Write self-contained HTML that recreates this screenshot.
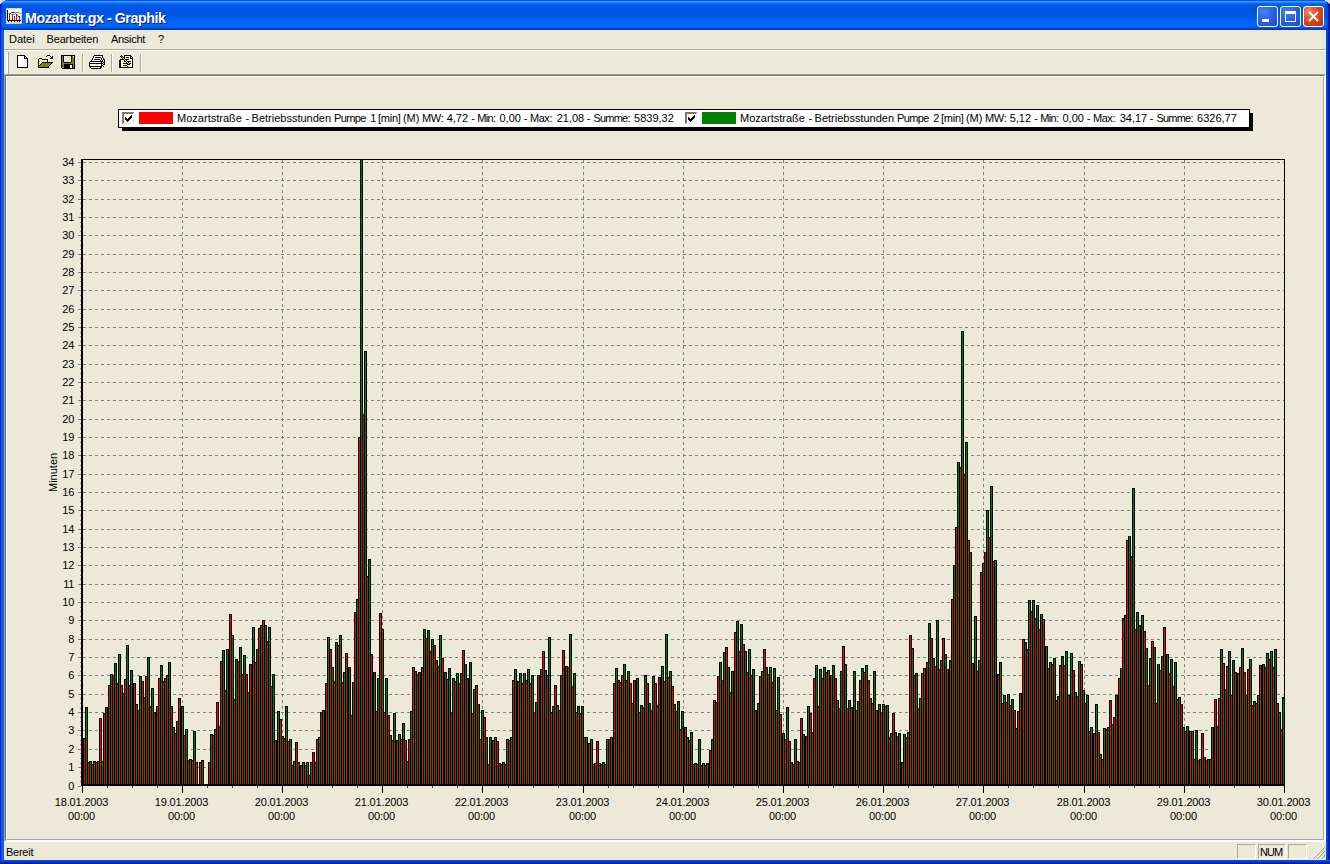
<!DOCTYPE html>
<html lang="de">
<head>
<meta charset="utf-8">
<title>Mozartstr.gx - Graphik</title>
<style>
html,body{margin:0;padding:0;}
body{width:1330px;height:864px;overflow:hidden;position:relative;background:#0831d9;font-family:"Liberation Sans",sans-serif;font-size:11px;color:#000;}
.abs{position:absolute;}
#win{position:absolute;left:0;top:0;width:1330px;height:864px;background:#ece9d8;overflow:hidden;}
#title{position:absolute;left:0;top:0;width:1330px;height:30px;
 background:linear-gradient(to bottom,#0a50dc 0px,#0a52e0 0.6px,#3d95ff 1.5px,#2084fc 2.5px,#0468f8 3.5px,#0260ee 4.5px,#005ae6 5.5px,#0057e3 6.5px,#0055e2 8px,#0056e4 13px,#0058e8 15px,#005bef 17.5px,#005ff6 19.5px,#0066ff 22px,#0066ff 25.5px,#0064fc 26.5px,#005af0 27.5px,#0046d8 28.5px,#0034c4 29.5px);}
#ttext{position:absolute;left:25px;top:9.5px;font-weight:bold;font-size:14.3px;line-height:16px;color:#fff;text-shadow:1px 1px 0 #0a1883;white-space:nowrap;letter-spacing:-0.48px;}
#bl{position:absolute;left:0;top:30px;width:4px;height:834px;background:linear-gradient(to right,#0019cf 0,#0831d9 25%,#166aee 50%,#0855dd 100%);}
#br{position:absolute;right:0;top:30px;width:4px;height:834px;background:linear-gradient(to right,#0855dd 0,#0041d6 40%,#001ea0 75%,#00138c 100%);}
#bb{position:absolute;left:0;bottom:0;width:1330px;height:4px;background:linear-gradient(to bottom,#0855dd 0,#0041d6 40%,#001ea0 75%,#00138c 100%);}
.tbtn{position:absolute;top:6px;width:21px;height:21px;box-sizing:border-box;border:1px solid #fff;border-radius:3px;
 background:radial-gradient(circle at 30% 25%,#4a80fa 0%,#2c62ec 45%,#1c47cc 100%);}
#bclose{background:radial-gradient(circle at 25% 25%,#ec8462 0%,#e0481c 45%,#bc300a 100%);}
#menu{position:absolute;left:4px;top:30px;width:1322px;height:19px;}
.mi{position:absolute;top:2px;line-height:14px;font-size:11px;white-space:nowrap;}
#msep1{position:absolute;left:4px;top:49px;width:1322px;height:1px;background:#aca899;}
#msep2{position:absolute;left:4px;top:50px;width:1322px;height:1px;background:#fff;}
.tsep{position:absolute;top:54px;width:1px;height:18px;background:#aca899;}
.tsep2{position:absolute;top:54px;width:1px;height:18px;background:#fff;}
#client{position:absolute;left:4px;top:74px;width:1322px;height:768px;box-sizing:border-box;border-top:1px solid #aca899;border-left:1px solid #aca899;border-right:1px solid #fff;border-bottom:1px solid #fff;background:#ece9d8;}
#client2{position:absolute;left:5px;top:75px;width:1320px;height:766px;box-sizing:border-box;border-top:1px solid #716f64;border-left:1px solid #716f64;border-right:1px solid #fff;border-bottom:1px solid #fff;}
#client3{position:absolute;left:6px;top:76px;width:1318px;height:764px;box-sizing:border-box;border-top:1px solid #fff;border-left:1px solid #fff;border-right:1px solid #aca899;border-bottom:1px solid #aca899;}
#legsh{position:absolute;left:122px;top:113px;width:1131px;height:18px;background:#000;}
#legend{position:absolute;left:118px;top:109px;width:1132px;height:19px;box-sizing:border-box;border:1px solid #000;background:#fff;}
.lt{position:absolute;top:111px;font-size:11px;line-height:14px;white-space:nowrap;}
.cb{position:absolute;top:112px;width:12px;height:12px;box-sizing:border-box;border-top:2px solid #7d7a6c;border-left:2px solid #7d7a6c;border-right:1px solid #f1efe2;border-bottom:1px solid #f1efe2;background:#fff;}
.sw{position:absolute;top:112px;width:34px;height:12px;}
.yl{position:absolute;left:40px;width:34.3px;letter-spacing:-0.15px;text-align:right;font-size:11px;line-height:14px;height:14px;}
.xl{position:absolute;top:795px;width:81px;text-align:center;font-size:11px;line-height:14px;white-space:nowrap;letter-spacing:-0.15px;}
.chart{position:absolute;left:0;top:0;}
#minuten{position:absolute;left:47px;top:492px;font-size:11px;line-height:12px;white-space:nowrap;transform-origin:0 0;transform:rotate(-90deg);}
#status{position:absolute;left:4px;top:841px;width:1322px;height:19px;}
.pane{position:absolute;top:844px;height:15px;box-sizing:border-box;border-top:1px solid #aca899;border-left:1px solid #aca899;border-right:1px solid #fff;border-bottom:1px solid #fff;}
.st{position:absolute;top:845px;font-size:11px;line-height:14px;white-space:nowrap;}
</style>
</head>
<body>
<div id="win">
 <div id="title"></div>
 <svg class="abs" style="left:0;top:0" width="6" height="6" viewBox="0 0 6 6" shape-rendering="crispEdges"><path d="M0 0h5v1h-2v1h-1v1h-1v2h-1z" fill="#dddcd8"/></svg>
 <svg class="abs" style="left:1324px;top:0" width="6" height="6" viewBox="0 0 6 6" shape-rendering="crispEdges"><path d="M6 0h-5v1h2v1h1v1h1v2h1z" fill="#dddcd8"/></svg>
 <svg class="abs" style="left:6px;top:8px" width="17" height="17" viewBox="0 0 17 17" shape-rendering="crispEdges">
  <rect x="0" y="0" width="16" height="16" fill="#d6cfc0"/>
  <rect x="1" y="1" width="14" height="13" fill="#fff"/>
  <rect x="3" y="5" width="1" height="8" fill="#f00"/><rect x="6" y="7" width="1" height="6" fill="#f00"/>
  <rect x="8" y="8" width="1" height="5" fill="#f00"/><rect x="10" y="7" width="1" height="6" fill="#f00"/>
  <rect x="13" y="8" width="1" height="5" fill="#f00"/>
  <path d="M3.5 6.5L5.5 4.5H8.5L11.5 7.5L13.5 9.5" stroke="#00f" stroke-width="1" fill="none" shape-rendering="auto"/>
  <path d="M2.5 5.5H4.5L5.5 6.5H8.5L10.5 4.5H12.5L14.5 5.5" stroke="#808000" stroke-width="1" fill="none" shape-rendering="auto"/>
  <rect x="1" y="2" width="1" height="11" fill="#000"/><rect x="1" y="12" width="14" height="1" fill="#000"/>
  <rect x="2" y="13" width="1" height="1" fill="#000"/><rect x="5" y="13" width="1" height="1" fill="#000"/><rect x="8" y="13" width="1" height="1" fill="#000"/><rect x="11" y="13" width="1" height="1" fill="#000"/><rect x="13" y="13" width="1" height="1" fill="#000"/>
 </svg>
 <div id="ttext">Mozartstr.gx - Graphik</div>
 <div class="tbtn" id="bmin" style="left:1257px"><div class="abs" style="left:4px;top:12px;width:7px;height:3px;background:#fff"></div></div>
 <div class="tbtn" id="bmax" style="left:1280px"><div class="abs" style="left:4px;top:4px;width:11px;height:11px;box-sizing:border-box;border:1px solid #fff;border-top:3px solid #fff"></div></div>
 <div class="tbtn" id="bclose" style="left:1303px">
  <svg class="abs" style="left:0;top:0" width="19" height="19" viewBox="0 0 19 19"><path d="M5 5L14 14M14 5L5 14" stroke="#fff" stroke-width="2" fill="none"/></svg>
 </div>
 <div class="abs" style="left:0;top:4px;width:1px;height:26px;background:#0a1ec8"></div><div class="abs" style="left:1px;top:3px;width:1px;height:27px;background:#0838d8"></div>
 <div class="abs" style="left:1329px;top:4px;width:1px;height:26px;background:#00138c"></div><div class="abs" style="left:1328px;top:3px;width:1px;height:27px;background:#0028b0"></div><div class="abs" style="left:1327px;top:2px;width:1px;height:28px;background:#0041d6"></div>
 <div id="bl"></div><div id="br"></div><div id="bb"></div>

 <div id="menu"></div>
 <div class="mi" style="left:9px;top:32px">Datei</div>
 <div class="mi" style="left:46.5px;top:32px;letter-spacing:-0.15px">Bearbeiten</div>
 <div class="mi" style="left:111px;top:32px;letter-spacing:-0.3px">Ansicht</div>
 <div class="mi" style="left:158px;top:32px">?</div>
 <div id="msep1"></div><div id="msep2"></div>
 <!-- toolbar -->
 <div class="abs" style="left:6px;top:52px;width:2px;height:21px;background:#fff"></div>
 <div class="abs" style="left:8px;top:52px;width:1px;height:22px;background:#aca899"></div>
 <svg class="abs" style="left:17px;top:55px" width="11" height="13" viewBox="0 0 11 13" shape-rendering="crispEdges"><path d="M0 0h8v1h-8zM0 1h1v1h-1zM7 1h2v1h-2zM0 2h1v1h-1zM7 2h1v1h-1zM9 2h1v1h-1zM0 3h1v1h-1zM7 3h4v1h-4zM0 4h1v1h-1zM10 4h1v1h-1zM0 5h1v1h-1zM10 5h1v1h-1zM0 6h1v1h-1zM10 6h1v1h-1zM0 7h1v1h-1zM10 7h1v1h-1zM0 8h1v1h-1zM10 8h1v1h-1zM0 9h1v1h-1zM10 9h1v1h-1zM0 10h1v1h-1zM10 10h1v1h-1zM0 11h1v1h-1zM10 11h1v1h-1zM0 12h11v1h-11z" fill="#000"/><path d="M1 1h6v1h-6zM1 2h6v1h-6zM8 2h1v1h-1zM1 3h6v1h-6zM1 4h9v1h-9zM1 5h9v1h-9zM1 6h9v1h-9zM1 7h9v1h-9zM1 8h9v1h-9zM1 9h9v1h-9zM1 10h9v1h-9zM1 11h9v1h-9z" fill="#fff"/></svg>
<svg class="abs" style="left:38px;top:54px" width="15" height="14" viewBox="0 0 15 14" shape-rendering="crispEdges"><path d="M9 1h3v1h-3zM8 2h1v1h-1zM12 2h1v1h-1zM14 2h1v1h-1zM13 3h2v1h-2zM1 4h3v1h-3zM12 4h3v1h-3zM0 5h1v1h-1zM4 5h6v1h-6zM0 6h1v1h-1zM9 6h1v1h-1zM0 7h1v1h-1zM9 7h1v1h-1zM0 8h1v1h-1zM4 8h11v1h-11zM0 9h1v1h-1zM3 9h1v1h-1zM13 9h1v1h-1zM0 10h1v1h-1zM2 10h1v1h-1zM12 10h1v1h-1zM0 11h2v1h-2zM11 11h1v1h-1zM0 12h1v1h-1zM10 12h1v1h-1zM0 13h11v1h-11z" fill="#000"/><path d="M1 5h1v1h-1zM3 5h1v1h-1zM2 6h1v1h-1zM4 6h1v1h-1zM6 6h1v1h-1zM8 6h1v1h-1zM1 7h1v1h-1zM3 7h1v1h-1zM5 7h1v1h-1zM7 7h1v1h-1zM2 8h1v1h-1zM1 9h1v1h-1z" fill="#ffff00"/><path d="M2 5h1v1h-1zM1 6h1v1h-1zM3 6h1v1h-1zM5 6h1v1h-1zM7 6h1v1h-1zM2 7h1v1h-1zM4 7h1v1h-1zM6 7h1v1h-1zM8 7h1v1h-1zM1 8h1v1h-1zM3 8h1v1h-1zM2 9h1v1h-1zM1 10h1v1h-1z" fill="#fff"/><path d="M4 9h9v1h-9zM3 10h9v1h-9zM2 11h9v1h-9zM1 12h9v1h-9z" fill="#808000"/></svg>
<svg class="abs" style="left:61px;top:55px" width="14" height="14" viewBox="0 0 14 14" shape-rendering="crispEdges"><path d="M0 0h14v1h-14zM0 1h1v1h-1zM2 1h1v1h-1zM10 1h1v1h-1zM13 1h1v1h-1zM0 2h1v1h-1zM2 2h1v1h-1zM10 2h1v1h-1zM13 2h1v1h-1zM0 3h1v1h-1zM2 3h1v1h-1zM10 3h1v1h-1zM13 3h1v1h-1zM0 4h1v1h-1zM2 4h1v1h-1zM10 4h1v1h-1zM13 4h1v1h-1zM0 5h1v1h-1zM2 5h1v1h-1zM10 5h1v1h-1zM13 5h1v1h-1zM0 6h1v1h-1zM2 6h1v1h-1zM10 6h1v1h-1zM13 6h1v1h-1zM0 7h1v1h-1zM3 7h7v1h-7zM13 7h1v1h-1zM0 8h1v1h-1zM13 8h1v1h-1zM0 9h1v1h-1zM3 9h9v1h-9zM13 9h1v1h-1zM0 10h1v1h-1zM3 10h6v1h-6zM11 10h1v1h-1zM13 10h1v1h-1zM0 11h1v1h-1zM3 11h6v1h-6zM11 11h1v1h-1zM13 11h1v1h-1zM0 12h1v1h-1zM3 12h6v1h-6zM11 12h1v1h-1zM13 12h1v1h-1zM1 13h13v1h-13z" fill="#000"/><path d="M1 1h1v1h-1zM11 1h1v1h-1zM1 2h1v1h-1zM11 2h2v1h-2zM1 3h1v1h-1zM11 3h2v1h-2zM1 4h1v1h-1zM11 4h2v1h-2zM1 5h1v1h-1zM11 5h2v1h-2zM1 6h1v1h-1zM11 6h2v1h-2zM1 7h2v1h-2zM10 7h3v1h-3zM1 8h12v1h-12zM1 9h2v1h-2zM12 9h1v1h-1zM1 10h2v1h-2zM12 10h1v1h-1zM1 11h2v1h-2zM12 11h1v1h-1zM1 12h2v1h-2zM12 12h1v1h-1z" fill="#808000"/><path d="M3 1h7v1h-7zM3 2h7v1h-7zM3 3h7v1h-7zM3 4h7v1h-7zM3 5h7v1h-7zM3 6h7v1h-7z" fill="#ece9d8"/><path d="M12 1h1v1h-1zM9 10h2v1h-2zM9 11h2v1h-2zM9 12h2v1h-2z" fill="#fff"/></svg>
<svg class="abs" style="left:89px;top:55px" width="16" height="14" viewBox="0 0 16 14" shape-rendering="crispEdges"><path d="M5 0h9v1h-9zM4 1h1v1h-1zM13 1h1v1h-1zM4 2h1v1h-1zM6 2h6v1h-6zM13 2h1v1h-1zM3 3h1v1h-1zM12 3h1v1h-1zM14 3h1v1h-1zM3 4h1v1h-1zM5 4h6v1h-6zM12 4h1v1h-1zM14 4h2v1h-2zM2 5h1v1h-1zM11 5h1v1h-1zM13 5h1v1h-1zM15 5h1v1h-1zM1 6h13v1h-13zM15 6h1v1h-1zM0 7h1v1h-1zM12 7h1v1h-1zM14 7h2v1h-2zM0 8h14v1h-14zM15 8h1v1h-1zM0 9h1v1h-1zM12 9h1v1h-1zM14 9h2v1h-2zM0 10h1v1h-1zM12 10h2v1h-2zM0 11h13v1h-13zM14 11h1v1h-1zM1 12h1v1h-1zM11 12h2v1h-2zM2 13h10v1h-10z" fill="#000"/><path d="M5 1h8v1h-8zM5 2h1v1h-1zM12 2h1v1h-1zM4 3h8v1h-8zM4 4h1v1h-1zM11 4h1v1h-1zM3 5h8v1h-8zM1 7h11v1h-11zM1 9h6v1h-6zM10 9h2v1h-2zM1 10h11v1h-11zM2 12h9v1h-9z" fill="#fff"/><path d="M7 9h3v1h-3z" fill="#ffff00"/></svg>
<svg class="abs" style="left:119px;top:55px" width="14" height="14" viewBox="0 0 14 14" shape-rendering="crispEdges"><path d="M2 0h1v1h-1zM5 0h7v1h-7zM1 1h1v1h-1zM3 1h1v1h-1zM5 1h1v1h-1zM11 1h2v1h-2zM2 2h1v1h-1zM4 2h2v1h-2zM7 2h3v1h-3zM11 2h1v1h-1zM13 2h1v1h-1zM3 3h1v1h-1zM5 3h1v1h-1zM11 3h3v1h-3zM1 4h4v1h-4zM6 4h4v1h-4zM13 4h1v1h-1zM0 5h2v1h-2zM5 5h1v1h-1zM7 5h1v1h-1zM13 5h1v1h-1zM1 6h1v1h-1zM5 6h2v1h-2zM8 6h4v1h-4zM13 6h1v1h-1zM1 7h1v1h-1zM7 7h1v1h-1zM9 7h1v1h-1zM13 7h1v1h-1zM1 8h1v1h-1zM4 8h5v1h-5zM10 8h2v1h-2zM13 8h1v1h-1zM1 9h1v1h-1zM8 9h3v1h-3zM13 9h1v1h-1zM1 10h1v1h-1zM4 10h4v1h-4zM13 10h1v1h-1zM1 11h1v1h-1zM8 11h1v1h-1zM13 11h1v1h-1zM1 12h13v1h-13z" fill="#000"/><path d="M2 1h1v1h-1z" fill="#ff0000"/><path d="M6 1h5v1h-5zM6 2h1v1h-1zM10 2h1v1h-1zM12 2h1v1h-1zM6 3h5v1h-5zM10 4h3v1h-3zM3 5h1v1h-1zM8 5h5v1h-5zM2 6h1v1h-1zM4 6h1v1h-1zM12 6h1v1h-1zM3 7h1v1h-1zM5 7h1v1h-1zM10 7h3v1h-3zM2 8h1v1h-1zM12 8h1v1h-1zM3 9h1v1h-1zM5 9h1v1h-1zM7 9h1v1h-1zM11 9h2v1h-2zM2 10h1v1h-1zM8 10h5v1h-5zM3 11h1v1h-1zM5 11h1v1h-1zM7 11h1v1h-1zM9 11h4v1h-4z" fill="#fff"/><path d="M3 2h1v1h-1zM4 3h1v1h-1zM5 4h1v1h-1zM2 5h1v1h-1zM4 5h1v1h-1zM6 5h1v1h-1zM3 6h1v1h-1zM7 6h1v1h-1zM2 7h1v1h-1zM4 7h1v1h-1zM6 7h1v1h-1zM8 7h1v1h-1zM3 8h1v1h-1zM9 8h1v1h-1zM2 9h1v1h-1zM4 9h1v1h-1zM6 9h1v1h-1zM3 10h1v1h-1zM2 11h1v1h-1zM4 11h1v1h-1zM6 11h1v1h-1z" fill="#ffff00"/><path d="M0 6h1v1h-1zM0 7h1v1h-1zM0 8h1v1h-1zM0 9h1v1h-1zM0 10h1v1h-1zM0 11h1v1h-1zM0 12h1v1h-1z" fill="#0000ff"/></svg>
 <div class="tsep" style="left:82px"></div><div class="tsep2" style="left:83px"></div>
 <div class="tsep" style="left:111px"></div><div class="tsep2" style="left:112px"></div>
 <div class="tsep" style="left:140px"></div><div class="tsep2" style="left:141px"></div>
 <div id="client"></div><div id="client2"></div><div id="client3"></div>

 <!-- legend -->
 <div id="legsh"></div><div id="legend"></div>
 <div class="cb" style="left:122px"><svg class="abs" style="left:1px;top:1px" width="7" height="7" viewBox="0 0 7 7" shape-rendering="crispEdges"><path d="M6 0h1v3h-1zM5 1h1v3h-1zM4 2h1v3h-1zM3 3h1v3h-1zM2 4h1v3h-1zM1 3h1v3h-1zM0 2h1v3h-1z" fill="#000"/></svg></div>
 <div class="sw" style="left:139px;background:#ff0000"></div>
 <div id="lt1"> <span class="lt" style="left:177.1px">Mozartstraße</span> <span class="lt" style="left:245.6px">-</span> <span class="lt" style="left:251.6px">Betriebsstunden</span> <span class="lt" style="left:334.0px;letter-spacing:-0.6px">Pumpe</span> <span class="lt" style="left:370.2px">1</span> <span class="lt" style="left:378.0px;letter-spacing:-0.25px">[min]</span> <span class="lt" style="left:402.9px">(M)</span> <span class="lt" style="left:422.0px;letter-spacing:-0.3px">MW:</span> <span class="lt" style="left:446.7px">4,72</span> <span class="lt" style="left:471.3px">-</span> <span class="lt" style="left:477.2px;letter-spacing:-0.6px">Min:</span> <span class="lt" style="left:499.5px">0,00</span> <span class="lt" style="left:523.7px">-</span> <span class="lt" style="left:529.9px;letter-spacing:-0.4px">Max:</span> <span class="lt" style="left:556.7px">21,08</span> <span class="lt" style="left:586.7px">-</span> <span class="lt" style="left:593.5px;letter-spacing:-0.8px">Summe:</span> <span class="lt" style="left:634.1px">5839,32</span> </div>
 <div class="cb" style="left:685px"><svg class="abs" style="left:1px;top:1px" width="7" height="7" viewBox="0 0 7 7" shape-rendering="crispEdges"><path d="M6 0h1v3h-1zM5 1h1v3h-1zM4 2h1v3h-1zM3 3h1v3h-1zM2 4h1v3h-1zM1 3h1v3h-1zM0 2h1v3h-1z" fill="#000"/></svg></div>
 <div class="sw" style="left:702px;background:#008000"></div>
 <div id="lt2"> <span class="lt" style="left:740.1px">Mozartstraße</span> <span class="lt" style="left:808.6px">-</span> <span class="lt" style="left:814.6px">Betriebsstunden</span> <span class="lt" style="left:897.0px;letter-spacing:-0.6px">Pumpe</span> <span class="lt" style="left:933.2px">2</span> <span class="lt" style="left:941.0px;letter-spacing:-0.25px">[min]</span> <span class="lt" style="left:965.9px">(M)</span> <span class="lt" style="left:985.0px;letter-spacing:-0.3px">MW:</span> <span class="lt" style="left:1009.7px">5,12</span> <span class="lt" style="left:1034.3px">-</span> <span class="lt" style="left:1040.2px;letter-spacing:-0.6px">Min:</span> <span class="lt" style="left:1062.5px">0,00</span> <span class="lt" style="left:1086.7px">-</span> <span class="lt" style="left:1092.9px;letter-spacing:-0.4px">Max:</span> <span class="lt" style="left:1119.7px">34,17</span> <span class="lt" style="left:1149.7px">-</span> <span class="lt" style="left:1156.5px;letter-spacing:-0.8px">Summe:</span> <span class="lt" style="left:1197.1px">6326,77</span> </div>

 <!-- chart -->
 <svg class="chart" width="1330" height="864" viewBox="0 0 1330 864" shape-rendering="crispEdges">
<rect x="81" y="159" width="1204" height="1" fill="#000"/>
<rect x="1284" y="159" width="1" height="626" fill="#000"/>
<path d="M83 767.5H1284M83 749.5H1284M83 730.5H1284M83 712.5H1284M83 694.5H1284M83 675.5H1284M83 657.5H1284M83 639.5H1284M83 620.5H1284M83 602.5H1284M83 584.5H1284M83 565.5H1284M83 547.5H1284M83 529.5H1284M83 510.5H1284M83 492.5H1284M83 474.5H1284M83 455.5H1284M83 437.5H1284M83 419.5H1284M83 400.5H1284M83 382.5H1284M83 364.5H1284M83 345.5H1284M83 327.5H1284M83 309.5H1284M83 290.5H1284M83 272.5H1284M83 254.5H1284M83 235.5H1284M83 217.5H1284M83 199.5H1284M83 180.5H1284M83 162.5H1284" stroke="#808080" stroke-width="1" stroke-dasharray="3 3" fill="none"/>
<path d="M182.5 160V784M282.5 160V784M382.5 160V784M482.5 160V784M583.5 160V784M683.5 160V784M783.5 160V784M883.5 160V784M983.5 160V784M1084.5 160V784M1184.5 160V784" stroke="#808080" stroke-width="1" stroke-dasharray="3 3" fill="none"/>
<path d="M83 738h3V785h-3ZM85 707h3V785h-3ZM87 762h3V785h-3ZM89 761h3V785h-3ZM91 764h3V785h-3ZM93 761h3V785h-3ZM95 762h3V785h-3ZM97 761h3V785h-3ZM99 718h3V785h-3ZM101 761h3V785h-3ZM103 713h3V785h-3ZM105 707h3V785h-3ZM108 685h3V785h-3ZM110 674h3V785h-3ZM112 675h3V785h-3ZM114 663h3V785h-3ZM116 683h3V785h-3ZM118 654h3V785h-3ZM120 685h3V785h-3ZM122 693h3V785h-3ZM124 679h3V785h-3ZM126 645h3V785h-3ZM128 685h3V785h-3ZM130 670h3V785h-3ZM133 683h3V785h-3ZM135 704h3V785h-3ZM137 710h3V785h-3ZM139 676h3V785h-3ZM141 681h3V785h-3ZM143 697h3V785h-3ZM145 676h3V785h-3ZM147 657h3V785h-3ZM149 706h3V785h-3ZM151 688h3V785h-3ZM153 712h3V785h-3ZM156 706h3V785h-3ZM158 678h3V785h-3ZM160 665h3V785h-3ZM162 681h3V785h-3ZM164 678h3V785h-3ZM166 675h3V785h-3ZM168 662h3V785h-3ZM170 706h3V785h-3ZM172 727h3V785h-3ZM174 733h3V785h-3ZM176 721h3V785h-3ZM178 698h3V785h-3ZM181 706h3V785h-3ZM183 735h3V785h-3ZM185 729h3V785h-3ZM187 760h3V785h-3ZM189 759h3V785h-3ZM191 760h3V785h-3ZM193 731h3V785h-3ZM195 762h3V785h-3ZM199 762h3V785h-3ZM201 760h3V785h-3ZM208 762h3V785h-3ZM210 734h3V785h-3ZM212 735h3V785h-3ZM214 729h3V785h-3ZM216 702h3V785h-3ZM218 726h3V785h-3ZM220 661h3V785h-3ZM222 650h3V785h-3ZM224 690h3V785h-3ZM226 649h3V785h-3ZM229 614h3V785h-3ZM231 635h3V785h-3ZM233 699h3V785h-3ZM235 659h3V785h-3ZM237 661h3V785h-3ZM239 647h3V785h-3ZM241 674h3V785h-3ZM243 655h3V785h-3ZM245 674h3V785h-3ZM247 692h3V785h-3ZM249 664h3V785h-3ZM252 627h3V785h-3ZM254 662h3V785h-3ZM256 649h3V785h-3ZM258 628h3V785h-3ZM260 625h3V785h-3ZM262 620h3V785h-3ZM264 625h3V785h-3ZM266 641h3V785h-3ZM268 627h3V785h-3ZM270 686h3V785h-3ZM272 674h3V785h-3ZM274 740h3V785h-3ZM277 711h3V785h-3ZM279 719h3V785h-3ZM281 736h3V785h-3ZM283 738h3V785h-3ZM285 706h3V785h-3ZM287 741h3V785h-3ZM289 739h3V785h-3ZM291 765h3V785h-3ZM293 761h3V785h-3ZM295 742h3V785h-3ZM297 762h3V785h-3ZM300 765h3V785h-3ZM302 762h3V785h-3ZM304 765h3V785h-3ZM306 762h3V785h-3ZM308 775h3V785h-3ZM310 762h3V785h-3ZM312 752h3V785h-3ZM314 762h3V785h-3ZM316 739h3V785h-3ZM318 737h3V785h-3ZM320 712h3V785h-3ZM322 710h3V785h-3ZM325 683h3V785h-3ZM327 637h3V785h-3ZM329 649h3V785h-3ZM331 667h3V785h-3ZM333 681h3V785h-3ZM335 642h3V785h-3ZM337 645h3V785h-3ZM339 635h3V785h-3ZM341 682h3V785h-3ZM343 672h3V785h-3ZM345 653h3V785h-3ZM348 667h3V785h-3ZM350 715h3V785h-3ZM352 682h3V785h-3ZM354 612h3V785h-3ZM356 599h3V785h-3ZM358 437h3V785h-3ZM360 159h3V785h-3ZM362 414h3V785h-3ZM364 351h3V785h-3ZM366 576h3V785h-3ZM368 559h3V785h-3ZM370 654h3V785h-3ZM373 672h3V785h-3ZM375 711h3V785h-3ZM377 678h3V785h-3ZM379 613h3V785h-3ZM381 629h3V785h-3ZM383 712h3V785h-3ZM385 678h3V785h-3ZM387 715h3V785h-3ZM389 735h3V785h-3ZM391 740h3V785h-3ZM393 713h3V785h-3ZM396 740h3V785h-3ZM398 734h3V785h-3ZM400 739h3V785h-3ZM402 723h3V785h-3ZM404 740h3V785h-3ZM406 761h3V785h-3ZM408 739h3V785h-3ZM410 711h3V785h-3ZM412 667h3V785h-3ZM414 671h3V785h-3ZM416 674h3V785h-3ZM418 672h3V785h-3ZM421 667h3V785h-3ZM423 629h3V785h-3ZM425 638h3V785h-3ZM427 630h3V785h-3ZM429 651h3V785h-3ZM431 639h3V785h-3ZM433 645h3V785h-3ZM435 660h3V785h-3ZM437 666h3V785h-3ZM439 635h3V785h-3ZM441 658h3V785h-3ZM444 672h3V785h-3ZM446 679h3V785h-3ZM448 668h3V785h-3ZM450 712h3V785h-3ZM452 678h3V785h-3ZM454 681h3V785h-3ZM456 673h3V785h-3ZM458 683h3V785h-3ZM460 673h3V785h-3ZM462 650h3V785h-3ZM464 664h3V785h-3ZM466 678h3V785h-3ZM469 662h3V785h-3ZM471 713h3V785h-3ZM473 689h3V785h-3ZM475 685h3V785h-3ZM477 704h3V785h-3ZM479 739h3V785h-3ZM481 710h3V785h-3ZM483 717h3V785h-3ZM485 737h3V785h-3ZM487 764h3V785h-3ZM489 737h3V785h-3ZM492 740h3V785h-3ZM494 737h3V785h-3ZM496 741h3V785h-3ZM498 763h3V785h-3ZM500 764h3V785h-3ZM502 762h3V785h-3ZM504 764h3V785h-3ZM506 739h3V785h-3ZM508 740h3V785h-3ZM510 737h3V785h-3ZM512 680h3V785h-3ZM514 669h3V785h-3ZM517 681h3V785h-3ZM519 673h3V785h-3ZM521 683h3V785h-3ZM523 673h3V785h-3ZM525 680h3V785h-3ZM527 669h3V785h-3ZM529 683h3V785h-3ZM531 675h3V785h-3ZM533 712h3V785h-3ZM535 702h3V785h-3ZM537 675h3V785h-3ZM540 669h3V785h-3ZM542 651h3V785h-3ZM544 670h3V785h-3ZM546 675h3V785h-3ZM548 637h3V785h-3ZM550 712h3V785h-3ZM552 706h3V785h-3ZM554 685h3V785h-3ZM556 705h3V785h-3ZM558 710h3V785h-3ZM560 675h3V785h-3ZM562 650h3V785h-3ZM565 666h3V785h-3ZM567 667h3V785h-3ZM569 634h3V785h-3ZM571 686h3V785h-3ZM573 673h3V785h-3ZM575 712h3V785h-3ZM577 706h3V785h-3ZM579 713h3V785h-3ZM581 706h3V785h-3ZM583 737h3V785h-3ZM585 737h3V785h-3ZM588 743h3V785h-3ZM590 739h3V785h-3ZM592 764h3V785h-3ZM594 763h3V785h-3ZM596 741h3V785h-3ZM598 763h3V785h-3ZM600 764h3V785h-3ZM602 762h3V785h-3ZM604 764h3V785h-3ZM606 739h3V785h-3ZM608 739h3V785h-3ZM610 737h3V785h-3ZM613 683h3V785h-3ZM615 668h3V785h-3ZM617 680h3V785h-3ZM619 682h3V785h-3ZM621 675h3V785h-3ZM623 664h3V785h-3ZM625 680h3V785h-3ZM627 671h3V785h-3ZM629 683h3V785h-3ZM631 703h3V785h-3ZM633 680h3V785h-3ZM636 678h3V785h-3ZM638 712h3V785h-3ZM640 705h3V785h-3ZM642 707h3V785h-3ZM644 675h3V785h-3ZM646 683h3V785h-3ZM648 703h3V785h-3ZM650 710h3V785h-3ZM652 676h3V785h-3ZM654 683h3V785h-3ZM656 705h3V785h-3ZM658 677h3V785h-3ZM661 666h3V785h-3ZM663 681h3V785h-3ZM665 634h3V785h-3ZM667 677h3V785h-3ZM669 671h3V785h-3ZM671 686h3V785h-3ZM673 704h3V785h-3ZM675 711h3V785h-3ZM677 701h3V785h-3ZM679 729h3V785h-3ZM681 711h3V785h-3ZM684 727h3V785h-3ZM686 737h3V785h-3ZM688 740h3V785h-3ZM690 732h3V785h-3ZM692 764h3V785h-3ZM694 763h3V785h-3ZM696 764h3V785h-3ZM698 739h3V785h-3ZM700 765h3V785h-3ZM702 763h3V785h-3ZM704 765h3V785h-3ZM706 763h3V785h-3ZM709 750h3V785h-3ZM711 739h3V785h-3ZM713 700h3V785h-3ZM715 702h3V785h-3ZM717 676h3V785h-3ZM719 662h3V785h-3ZM721 680h3V785h-3ZM723 652h3V785h-3ZM725 647h3V785h-3ZM727 667h3V785h-3ZM729 692h3V785h-3ZM731 671h3V785h-3ZM734 632h3V785h-3ZM736 621h3V785h-3ZM738 651h3V785h-3ZM740 624h3V785h-3ZM742 644h3V785h-3ZM744 651h3V785h-3ZM746 672h3V785h-3ZM748 649h3V785h-3ZM750 675h3V785h-3ZM752 669h3V785h-3ZM754 710h3V785h-3ZM757 703h3V785h-3ZM759 676h3V785h-3ZM761 671h3V785h-3ZM763 649h3V785h-3ZM765 667h3V785h-3ZM767 674h3V785h-3ZM769 667h3V785h-3ZM771 682h3V785h-3ZM773 668h3V785h-3ZM775 710h3V785h-3ZM777 677h3V785h-3ZM779 714h3V785h-3ZM782 733h3V785h-3ZM784 739h3V785h-3ZM786 707h3V785h-3ZM788 741h3V785h-3ZM790 762h3V785h-3ZM792 764h3V785h-3ZM794 739h3V785h-3ZM796 761h3V785h-3ZM798 762h3V785h-3ZM800 718h3V785h-3ZM802 734h3V785h-3ZM805 736h3V785h-3ZM807 706h3V785h-3ZM809 713h3V785h-3ZM811 732h3V785h-3ZM813 678h3V785h-3ZM815 665h3V785h-3ZM817 706h3V785h-3ZM819 669h3V785h-3ZM821 678h3V785h-3ZM823 667h3V785h-3ZM825 672h3V785h-3ZM827 670h3V785h-3ZM830 675h3V785h-3ZM832 665h3V785h-3ZM834 678h3V785h-3ZM836 700h3V785h-3ZM838 708h3V785h-3ZM840 671h3V785h-3ZM842 646h3V785h-3ZM844 664h3V785h-3ZM846 708h3V785h-3ZM848 700h3V785h-3ZM850 707h3V785h-3ZM853 671h3V785h-3ZM855 710h3V785h-3ZM857 701h3V785h-3ZM859 680h3V785h-3ZM861 668h3V785h-3ZM863 672h3V785h-3ZM865 665h3V785h-3ZM867 680h3V785h-3ZM869 698h3V785h-3ZM871 703h3V785h-3ZM873 671h3V785h-3ZM875 710h3V785h-3ZM878 704h3V785h-3ZM880 712h3V785h-3ZM882 704h3V785h-3ZM884 706h3V785h-3ZM886 705h3V785h-3ZM888 737h3V785h-3ZM890 733h3V785h-3ZM892 713h3V785h-3ZM894 732h3V785h-3ZM896 736h3V785h-3ZM898 733h3V785h-3ZM901 762h3V785h-3ZM903 734h3V785h-3ZM905 737h3V785h-3ZM907 732h3V785h-3ZM909 635h3V785h-3ZM911 648h3V785h-3ZM913 675h3V785h-3ZM915 673h3V785h-3ZM917 708h3V785h-3ZM919 698h3V785h-3ZM921 673h3V785h-3ZM923 668h3V785h-3ZM926 662h3V785h-3ZM928 623h3V785h-3ZM930 638h3V785h-3ZM932 658h3V785h-3ZM934 666h3V785h-3ZM936 620h3V785h-3ZM938 669h3V785h-3ZM940 660h3V785h-3ZM942 638h3V785h-3ZM944 654h3V785h-3ZM946 669h3V785h-3ZM949 660h3V785h-3ZM951 599h3V785h-3ZM953 565h3V785h-3ZM955 527h3V785h-3ZM957 462h3V785h-3ZM959 467h3V785h-3ZM961 331h3V785h-3ZM963 474h3V785h-3ZM965 442h3V785h-3ZM967 540h3V785h-3ZM969 552h3V785h-3ZM971 663h3V785h-3ZM974 616h3V785h-3ZM976 671h3V785h-3ZM978 660h3V785h-3ZM980 572h3V785h-3ZM982 563h3V785h-3ZM984 552h3V785h-3ZM986 510h3V785h-3ZM988 537h3V785h-3ZM990 486h3V785h-3ZM992 561h3V785h-3ZM994 560h3V785h-3ZM997 674h3V785h-3ZM999 662h3V785h-3ZM1001 703h3V785h-3ZM1003 695h3V785h-3ZM1005 702h3V785h-3ZM1007 694h3V785h-3ZM1009 705h3V785h-3ZM1011 699h3V785h-3ZM1013 710h3V785h-3ZM1015 728h3V785h-3ZM1017 711h3V785h-3ZM1019 693h3V785h-3ZM1022 639h3V785h-3ZM1024 642h3V785h-3ZM1026 649h3V785h-3ZM1028 600h3V785h-3ZM1030 611h3V785h-3ZM1032 600h3V785h-3ZM1034 618h3V785h-3ZM1036 605h3V785h-3ZM1038 629h3V785h-3ZM1040 614h3V785h-3ZM1042 619h3V785h-3ZM1045 646h3V785h-3ZM1047 668h3V785h-3ZM1049 662h3V785h-3ZM1051 664h3V785h-3ZM1053 658h3V785h-3ZM1055 700h3V785h-3ZM1057 696h3V785h-3ZM1059 665h3V785h-3ZM1061 656h3V785h-3ZM1063 665h3V785h-3ZM1065 651h3V785h-3ZM1067 695h3V785h-3ZM1070 653h3V785h-3ZM1072 670h3V785h-3ZM1074 692h3V785h-3ZM1076 696h3V785h-3ZM1078 661h3V785h-3ZM1080 664h3V785h-3ZM1082 690h3V785h-3ZM1084 703h3V785h-3ZM1086 695h3V785h-3ZM1088 731h3V785h-3ZM1090 727h3V785h-3ZM1093 733h3V785h-3ZM1095 704h3V785h-3ZM1097 732h3V785h-3ZM1099 754h3V785h-3ZM1101 759h3V785h-3ZM1103 728h3V785h-3ZM1105 729h3V785h-3ZM1107 727h3V785h-3ZM1109 700h3V785h-3ZM1111 724h3V785h-3ZM1113 717h3V785h-3ZM1115 695h3V785h-3ZM1118 678h3V785h-3ZM1120 668h3V785h-3ZM1122 618h3V785h-3ZM1124 615h3V785h-3ZM1126 540h3V785h-3ZM1128 536h3V785h-3ZM1130 556h3V785h-3ZM1132 488h3V785h-3ZM1134 629h3V785h-3ZM1136 612h3V785h-3ZM1138 625h3V785h-3ZM1141 615h3V785h-3ZM1143 631h3V785h-3ZM1145 648h3V785h-3ZM1147 685h3V785h-3ZM1149 658h3V785h-3ZM1151 641h3V785h-3ZM1153 647h3V785h-3ZM1155 703h3V785h-3ZM1157 664h3V785h-3ZM1159 670h3V785h-3ZM1161 656h3V785h-3ZM1163 627h3V785h-3ZM1166 654h3V785h-3ZM1168 673h3V785h-3ZM1170 659h3V785h-3ZM1172 686h3V785h-3ZM1174 662h3V785h-3ZM1176 699h3V785h-3ZM1178 697h3V785h-3ZM1180 704h3V785h-3ZM1182 727h3V785h-3ZM1184 731h3V785h-3ZM1186 726h3V785h-3ZM1189 731h3V785h-3ZM1191 731h3V785h-3ZM1193 759h3V785h-3ZM1195 730h3V785h-3ZM1197 760h3V785h-3ZM1199 759h3V785h-3ZM1201 733h3V785h-3ZM1203 757h3V785h-3ZM1205 760h3V785h-3ZM1207 759h3V785h-3ZM1209 759h3V785h-3ZM1211 727h3V785h-3ZM1214 699h3V785h-3ZM1216 726h3V785h-3ZM1218 698h3V785h-3ZM1220 649h3V785h-3ZM1222 663h3V785h-3ZM1224 689h3V785h-3ZM1226 666h3V785h-3ZM1228 651h3V785h-3ZM1230 695h3V785h-3ZM1232 660h3V785h-3ZM1234 672h3V785h-3ZM1237 673h3V785h-3ZM1239 667h3V785h-3ZM1241 648h3V785h-3ZM1243 672h3V785h-3ZM1245 695h3V785h-3ZM1247 669h3V785h-3ZM1249 659h3V785h-3ZM1251 705h3V785h-3ZM1253 701h3V785h-3ZM1255 703h3V785h-3ZM1257 695h3V785h-3ZM1259 665h3V785h-3ZM1262 664h3V785h-3ZM1264 667h3V785h-3ZM1266 653h3V785h-3ZM1268 659h3V785h-3ZM1270 651h3V785h-3ZM1272 667h3V785h-3ZM1274 649h3V785h-3ZM1276 703h3V785h-3ZM1278 712h3V785h-3ZM1280 729h3V785h-3ZM1282 697h3V785h-3Z" fill="#000"/>
<path d="M84 739h1V785h-1ZM88 763h1V785h-1ZM92 765h1V785h-1ZM96 763h1V785h-1ZM100 719h1V785h-1ZM104 714h1V785h-1ZM109 686h1V785h-1ZM113 676h1V785h-1ZM117 684h1V785h-1ZM121 686h1V785h-1ZM125 680h1V785h-1ZM129 686h1V785h-1ZM134 684h1V785h-1ZM138 711h1V785h-1ZM142 682h1V785h-1ZM146 677h1V785h-1ZM150 707h1V785h-1ZM154 713h1V785h-1ZM159 679h1V785h-1ZM163 682h1V785h-1ZM167 676h1V785h-1ZM171 707h1V785h-1ZM175 734h1V785h-1ZM179 699h1V785h-1ZM184 736h1V785h-1ZM188 761h1V785h-1ZM192 761h1V785h-1ZM196 763h1V785h-1ZM200 763h1V785h-1ZM209 763h1V785h-1ZM213 736h1V785h-1ZM217 703h1V785h-1ZM221 662h1V785h-1ZM225 691h1V785h-1ZM230 615h1V785h-1ZM234 700h1V785h-1ZM238 662h1V785h-1ZM242 675h1V785h-1ZM246 675h1V785h-1ZM250 665h1V785h-1ZM255 663h1V785h-1ZM259 629h1V785h-1ZM263 621h1V785h-1ZM267 642h1V785h-1ZM271 687h1V785h-1ZM275 741h1V785h-1ZM280 720h1V785h-1ZM284 739h1V785h-1ZM288 742h1V785h-1ZM292 766h1V785h-1ZM296 743h1V785h-1ZM301 766h1V785h-1ZM305 766h1V785h-1ZM309 776h1V785h-1ZM313 753h1V785h-1ZM317 740h1V785h-1ZM321 713h1V785h-1ZM326 684h1V785h-1ZM330 650h1V785h-1ZM334 682h1V785h-1ZM338 646h1V785h-1ZM342 683h1V785h-1ZM346 654h1V785h-1ZM351 716h1V785h-1ZM355 613h1V785h-1ZM359 438h1V785h-1ZM363 415h1V785h-1ZM367 577h1V785h-1ZM371 655h1V785h-1ZM376 712h1V785h-1ZM380 614h1V785h-1ZM384 713h1V785h-1ZM388 716h1V785h-1ZM392 741h1V785h-1ZM397 741h1V785h-1ZM401 740h1V785h-1ZM405 741h1V785h-1ZM409 740h1V785h-1ZM413 668h1V785h-1ZM417 675h1V785h-1ZM422 668h1V785h-1ZM426 639h1V785h-1ZM430 652h1V785h-1ZM434 646h1V785h-1ZM438 667h1V785h-1ZM442 659h1V785h-1ZM447 680h1V785h-1ZM451 713h1V785h-1ZM455 682h1V785h-1ZM459 684h1V785h-1ZM463 651h1V785h-1ZM467 679h1V785h-1ZM472 714h1V785h-1ZM476 686h1V785h-1ZM480 740h1V785h-1ZM484 718h1V785h-1ZM488 765h1V785h-1ZM493 741h1V785h-1ZM497 742h1V785h-1ZM501 765h1V785h-1ZM505 765h1V785h-1ZM509 741h1V785h-1ZM513 681h1V785h-1ZM518 682h1V785h-1ZM522 684h1V785h-1ZM526 681h1V785h-1ZM530 684h1V785h-1ZM534 713h1V785h-1ZM538 676h1V785h-1ZM543 652h1V785h-1ZM547 676h1V785h-1ZM551 713h1V785h-1ZM555 686h1V785h-1ZM559 711h1V785h-1ZM563 651h1V785h-1ZM568 668h1V785h-1ZM572 687h1V785h-1ZM576 713h1V785h-1ZM580 714h1V785h-1ZM584 738h1V785h-1ZM589 744h1V785h-1ZM593 765h1V785h-1ZM597 742h1V785h-1ZM601 765h1V785h-1ZM605 765h1V785h-1ZM609 740h1V785h-1ZM614 684h1V785h-1ZM618 681h1V785h-1ZM622 676h1V785h-1ZM626 681h1V785h-1ZM630 684h1V785h-1ZM634 681h1V785h-1ZM639 713h1V785h-1ZM643 708h1V785h-1ZM647 684h1V785h-1ZM651 711h1V785h-1ZM655 684h1V785h-1ZM659 678h1V785h-1ZM664 682h1V785h-1ZM668 678h1V785h-1ZM672 687h1V785h-1ZM676 712h1V785h-1ZM680 730h1V785h-1ZM685 728h1V785h-1ZM689 741h1V785h-1ZM693 765h1V785h-1ZM697 765h1V785h-1ZM701 766h1V785h-1ZM705 766h1V785h-1ZM710 751h1V785h-1ZM714 701h1V785h-1ZM718 677h1V785h-1ZM722 681h1V785h-1ZM726 648h1V785h-1ZM730 693h1V785h-1ZM735 633h1V785h-1ZM739 652h1V785h-1ZM743 645h1V785h-1ZM747 673h1V785h-1ZM751 676h1V785h-1ZM755 711h1V785h-1ZM760 677h1V785h-1ZM764 650h1V785h-1ZM768 675h1V785h-1ZM772 683h1V785h-1ZM776 711h1V785h-1ZM780 715h1V785h-1ZM785 740h1V785h-1ZM789 742h1V785h-1ZM793 765h1V785h-1ZM797 762h1V785h-1ZM801 719h1V785h-1ZM806 737h1V785h-1ZM810 714h1V785h-1ZM814 679h1V785h-1ZM818 707h1V785h-1ZM822 679h1V785h-1ZM826 673h1V785h-1ZM831 676h1V785h-1ZM835 679h1V785h-1ZM839 709h1V785h-1ZM843 647h1V785h-1ZM847 709h1V785h-1ZM851 708h1V785h-1ZM856 711h1V785h-1ZM860 681h1V785h-1ZM864 673h1V785h-1ZM868 681h1V785h-1ZM872 704h1V785h-1ZM876 711h1V785h-1ZM881 713h1V785h-1ZM885 707h1V785h-1ZM889 738h1V785h-1ZM893 714h1V785h-1ZM897 737h1V785h-1ZM902 763h1V785h-1ZM906 738h1V785h-1ZM910 636h1V785h-1ZM914 676h1V785h-1ZM918 709h1V785h-1ZM922 674h1V785h-1ZM927 663h1V785h-1ZM931 639h1V785h-1ZM935 667h1V785h-1ZM939 670h1V785h-1ZM943 639h1V785h-1ZM947 670h1V785h-1ZM952 600h1V785h-1ZM956 528h1V785h-1ZM960 468h1V785h-1ZM964 475h1V785h-1ZM968 541h1V785h-1ZM972 664h1V785h-1ZM977 672h1V785h-1ZM981 573h1V785h-1ZM985 553h1V785h-1ZM989 538h1V785h-1ZM993 562h1V785h-1ZM998 675h1V785h-1ZM1002 704h1V785h-1ZM1006 703h1V785h-1ZM1010 706h1V785h-1ZM1014 711h1V785h-1ZM1018 712h1V785h-1ZM1023 640h1V785h-1ZM1027 650h1V785h-1ZM1031 612h1V785h-1ZM1035 619h1V785h-1ZM1039 630h1V785h-1ZM1043 620h1V785h-1ZM1048 669h1V785h-1ZM1052 665h1V785h-1ZM1056 701h1V785h-1ZM1060 666h1V785h-1ZM1064 666h1V785h-1ZM1068 696h1V785h-1ZM1073 671h1V785h-1ZM1077 697h1V785h-1ZM1081 665h1V785h-1ZM1085 704h1V785h-1ZM1089 732h1V785h-1ZM1094 734h1V785h-1ZM1098 733h1V785h-1ZM1102 760h1V785h-1ZM1106 730h1V785h-1ZM1110 701h1V785h-1ZM1114 718h1V785h-1ZM1119 679h1V785h-1ZM1123 619h1V785h-1ZM1127 541h1V785h-1ZM1131 557h1V785h-1ZM1135 630h1V785h-1ZM1139 626h1V785h-1ZM1144 632h1V785h-1ZM1148 686h1V785h-1ZM1152 642h1V785h-1ZM1156 704h1V785h-1ZM1160 671h1V785h-1ZM1164 628h1V785h-1ZM1169 674h1V785h-1ZM1173 687h1V785h-1ZM1177 700h1V785h-1ZM1181 705h1V785h-1ZM1185 732h1V785h-1ZM1190 732h1V785h-1ZM1194 760h1V785h-1ZM1198 761h1V785h-1ZM1202 734h1V785h-1ZM1206 761h1V785h-1ZM1210 760h1V785h-1ZM1215 700h1V785h-1ZM1219 699h1V785h-1ZM1223 664h1V785h-1ZM1227 667h1V785h-1ZM1231 696h1V785h-1ZM1235 673h1V785h-1ZM1240 668h1V785h-1ZM1244 673h1V785h-1ZM1248 670h1V785h-1ZM1252 706h1V785h-1ZM1256 704h1V785h-1ZM1260 666h1V785h-1ZM1265 668h1V785h-1ZM1269 660h1V785h-1ZM1273 668h1V785h-1ZM1277 704h1V785h-1ZM1281 730h1V785h-1Z" fill="#ff0000"/>
<path d="M86 708h1V785h-1ZM90 762h1V785h-1ZM94 762h1V785h-1ZM98 762h1V785h-1ZM102 762h1V785h-1ZM106 708h1V785h-1ZM111 675h1V785h-1ZM115 664h1V785h-1ZM119 655h1V785h-1ZM123 694h1V785h-1ZM127 646h1V785h-1ZM131 671h1V785h-1ZM136 705h1V785h-1ZM140 677h1V785h-1ZM144 698h1V785h-1ZM148 658h1V785h-1ZM152 689h1V785h-1ZM157 707h1V785h-1ZM161 666h1V785h-1ZM165 679h1V785h-1ZM169 663h1V785h-1ZM173 728h1V785h-1ZM177 722h1V785h-1ZM182 707h1V785h-1ZM186 730h1V785h-1ZM190 760h1V785h-1ZM194 732h1V785h-1ZM202 761h1V785h-1ZM211 735h1V785h-1ZM215 730h1V785h-1ZM219 727h1V785h-1ZM223 651h1V785h-1ZM227 650h1V785h-1ZM232 636h1V785h-1ZM236 660h1V785h-1ZM240 648h1V785h-1ZM244 656h1V785h-1ZM248 693h1V785h-1ZM253 628h1V785h-1ZM257 650h1V785h-1ZM261 626h1V785h-1ZM265 626h1V785h-1ZM269 628h1V785h-1ZM273 675h1V785h-1ZM278 712h1V785h-1ZM282 737h1V785h-1ZM286 707h1V785h-1ZM290 740h1V785h-1ZM294 762h1V785h-1ZM298 763h1V785h-1ZM303 763h1V785h-1ZM307 763h1V785h-1ZM311 763h1V785h-1ZM315 763h1V785h-1ZM319 738h1V785h-1ZM323 711h1V785h-1ZM328 638h1V785h-1ZM332 668h1V785h-1ZM336 643h1V785h-1ZM340 636h1V785h-1ZM344 673h1V785h-1ZM349 668h1V785h-1ZM353 683h1V785h-1ZM357 600h1V785h-1ZM361 160h1V785h-1ZM365 352h1V785h-1ZM369 560h1V785h-1ZM374 673h1V785h-1ZM378 679h1V785h-1ZM382 630h1V785h-1ZM386 679h1V785h-1ZM390 736h1V785h-1ZM394 714h1V785h-1ZM399 735h1V785h-1ZM403 724h1V785h-1ZM407 762h1V785h-1ZM411 712h1V785h-1ZM415 672h1V785h-1ZM419 673h1V785h-1ZM424 630h1V785h-1ZM428 631h1V785h-1ZM432 640h1V785h-1ZM436 661h1V785h-1ZM440 636h1V785h-1ZM445 673h1V785h-1ZM449 669h1V785h-1ZM453 679h1V785h-1ZM457 674h1V785h-1ZM461 674h1V785h-1ZM465 665h1V785h-1ZM470 663h1V785h-1ZM474 690h1V785h-1ZM478 705h1V785h-1ZM482 711h1V785h-1ZM486 738h1V785h-1ZM490 738h1V785h-1ZM495 738h1V785h-1ZM499 764h1V785h-1ZM503 763h1V785h-1ZM507 740h1V785h-1ZM511 738h1V785h-1ZM515 670h1V785h-1ZM520 674h1V785h-1ZM524 674h1V785h-1ZM528 670h1V785h-1ZM532 676h1V785h-1ZM536 703h1V785h-1ZM541 670h1V785h-1ZM545 671h1V785h-1ZM549 638h1V785h-1ZM553 707h1V785h-1ZM557 706h1V785h-1ZM561 676h1V785h-1ZM566 667h1V785h-1ZM570 635h1V785h-1ZM574 674h1V785h-1ZM578 707h1V785h-1ZM582 707h1V785h-1ZM586 738h1V785h-1ZM591 740h1V785h-1ZM595 764h1V785h-1ZM599 764h1V785h-1ZM603 763h1V785h-1ZM607 740h1V785h-1ZM611 738h1V785h-1ZM616 669h1V785h-1ZM620 683h1V785h-1ZM624 665h1V785h-1ZM628 672h1V785h-1ZM632 704h1V785h-1ZM637 679h1V785h-1ZM641 706h1V785h-1ZM645 676h1V785h-1ZM649 704h1V785h-1ZM653 677h1V785h-1ZM657 706h1V785h-1ZM662 667h1V785h-1ZM666 635h1V785h-1ZM670 672h1V785h-1ZM674 705h1V785h-1ZM678 702h1V785h-1ZM682 712h1V785h-1ZM687 738h1V785h-1ZM691 733h1V785h-1ZM695 764h1V785h-1ZM699 740h1V785h-1ZM703 764h1V785h-1ZM707 764h1V785h-1ZM712 740h1V785h-1ZM716 703h1V785h-1ZM720 663h1V785h-1ZM724 653h1V785h-1ZM728 668h1V785h-1ZM732 672h1V785h-1ZM737 622h1V785h-1ZM741 625h1V785h-1ZM745 652h1V785h-1ZM749 650h1V785h-1ZM753 670h1V785h-1ZM758 704h1V785h-1ZM762 672h1V785h-1ZM766 668h1V785h-1ZM770 668h1V785h-1ZM774 669h1V785h-1ZM778 678h1V785h-1ZM783 734h1V785h-1ZM787 708h1V785h-1ZM791 763h1V785h-1ZM795 740h1V785h-1ZM799 763h1V785h-1ZM803 735h1V785h-1ZM808 707h1V785h-1ZM812 733h1V785h-1ZM816 666h1V785h-1ZM820 670h1V785h-1ZM824 668h1V785h-1ZM828 671h1V785h-1ZM833 666h1V785h-1ZM837 701h1V785h-1ZM841 672h1V785h-1ZM845 665h1V785h-1ZM849 701h1V785h-1ZM854 672h1V785h-1ZM858 702h1V785h-1ZM862 669h1V785h-1ZM866 666h1V785h-1ZM870 699h1V785h-1ZM874 672h1V785h-1ZM879 705h1V785h-1ZM883 705h1V785h-1ZM887 706h1V785h-1ZM891 734h1V785h-1ZM895 733h1V785h-1ZM899 734h1V785h-1ZM904 735h1V785h-1ZM908 733h1V785h-1ZM912 649h1V785h-1ZM916 674h1V785h-1ZM920 699h1V785h-1ZM924 669h1V785h-1ZM929 624h1V785h-1ZM933 659h1V785h-1ZM937 621h1V785h-1ZM941 661h1V785h-1ZM945 655h1V785h-1ZM950 661h1V785h-1ZM954 566h1V785h-1ZM958 463h1V785h-1ZM962 332h1V785h-1ZM966 443h1V785h-1ZM970 553h1V785h-1ZM975 617h1V785h-1ZM979 661h1V785h-1ZM983 564h1V785h-1ZM987 511h1V785h-1ZM991 487h1V785h-1ZM995 561h1V785h-1ZM1000 663h1V785h-1ZM1004 696h1V785h-1ZM1008 695h1V785h-1ZM1012 700h1V785h-1ZM1016 729h1V785h-1ZM1020 694h1V785h-1ZM1025 643h1V785h-1ZM1029 601h1V785h-1ZM1033 601h1V785h-1ZM1037 606h1V785h-1ZM1041 615h1V785h-1ZM1046 647h1V785h-1ZM1050 663h1V785h-1ZM1054 659h1V785h-1ZM1058 697h1V785h-1ZM1062 657h1V785h-1ZM1066 652h1V785h-1ZM1071 654h1V785h-1ZM1075 693h1V785h-1ZM1079 662h1V785h-1ZM1083 691h1V785h-1ZM1087 696h1V785h-1ZM1091 728h1V785h-1ZM1096 705h1V785h-1ZM1100 755h1V785h-1ZM1104 729h1V785h-1ZM1108 728h1V785h-1ZM1112 725h1V785h-1ZM1116 696h1V785h-1ZM1121 669h1V785h-1ZM1125 616h1V785h-1ZM1129 537h1V785h-1ZM1133 489h1V785h-1ZM1137 613h1V785h-1ZM1142 616h1V785h-1ZM1146 649h1V785h-1ZM1150 659h1V785h-1ZM1154 648h1V785h-1ZM1158 665h1V785h-1ZM1162 657h1V785h-1ZM1167 655h1V785h-1ZM1171 660h1V785h-1ZM1175 663h1V785h-1ZM1179 698h1V785h-1ZM1183 728h1V785h-1ZM1187 727h1V785h-1ZM1192 732h1V785h-1ZM1196 731h1V785h-1ZM1200 760h1V785h-1ZM1204 758h1V785h-1ZM1208 760h1V785h-1ZM1212 728h1V785h-1ZM1217 727h1V785h-1ZM1221 650h1V785h-1ZM1225 690h1V785h-1ZM1229 652h1V785h-1ZM1233 661h1V785h-1ZM1238 674h1V785h-1ZM1242 649h1V785h-1ZM1246 696h1V785h-1ZM1250 660h1V785h-1ZM1254 702h1V785h-1ZM1258 696h1V785h-1ZM1263 665h1V785h-1ZM1267 654h1V785h-1ZM1271 652h1V785h-1ZM1275 650h1V785h-1ZM1279 713h1V785h-1ZM1283 698h1V785h-1Z" fill="#008000"/>
<rect x="81" y="159" width="2" height="627" fill="#000"/>
<rect x="81" y="784" width="1204" height="2" fill="#000"/>
<path d="M78 786.5H81M80 781.5H81M80 776.5H81M80 772.5H81M78 767.5H81M80 763.5H81M80 758.5H81M80 753.5H81M78 749.5H81M80 744.5H81M80 740.5H81M80 735.5H81M78 730.5H81M80 726.5H81M80 721.5H81M80 717.5H81M78 712.5H81M80 708.5H81M80 703.5H81M80 698.5H81M78 694.5H81M80 689.5H81M80 685.5H81M80 680.5H81M78 675.5H81M80 671.5H81M80 666.5H81M80 662.5H81M78 657.5H81M80 653.5H81M80 648.5H81M80 643.5H81M78 639.5H81M80 634.5H81M80 630.5H81M80 625.5H81M78 620.5H81M80 616.5H81M80 611.5H81M80 607.5H81M78 602.5H81M80 598.5H81M80 593.5H81M80 588.5H81M78 584.5H81M80 579.5H81M80 575.5H81M80 570.5H81M78 565.5H81M80 561.5H81M80 556.5H81M80 552.5H81M78 547.5H81M80 543.5H81M80 538.5H81M80 533.5H81M78 529.5H81M80 524.5H81M80 520.5H81M80 515.5H81M78 510.5H81M80 506.5H81M80 501.5H81M80 497.5H81M78 492.5H81M80 488.5H81M80 483.5H81M80 478.5H81M78 474.5H81M80 469.5H81M80 465.5H81M80 460.5H81M78 455.5H81M80 451.5H81M80 446.5H81M80 442.5H81M78 437.5H81M80 433.5H81M80 428.5H81M80 423.5H81M78 419.5H81M80 414.5H81M80 410.5H81M80 405.5H81M78 400.5H81M80 396.5H81M80 391.5H81M80 387.5H81M78 382.5H81M80 378.5H81M80 373.5H81M80 368.5H81M78 364.5H81M80 359.5H81M80 355.5H81M80 350.5H81M78 345.5H81M80 341.5H81M80 336.5H81M80 332.5H81M78 327.5H81M80 323.5H81M80 318.5H81M80 313.5H81M78 309.5H81M80 304.5H81M80 300.5H81M80 295.5H81M78 290.5H81M80 286.5H81M80 281.5H81M80 277.5H81M78 272.5H81M80 268.5H81M80 263.5H81M80 258.5H81M78 254.5H81M80 249.5H81M80 245.5H81M80 240.5H81M78 235.5H81M80 231.5H81M80 226.5H81M80 222.5H81M78 217.5H81M80 213.5H81M80 208.5H81M80 203.5H81M78 199.5H81M80 194.5H81M80 190.5H81M80 185.5H81M78 180.5H81M80 176.5H81M80 171.5H81M80 167.5H81M78 162.5H81" stroke="#808080" stroke-width="1" fill="none"/>
<path d="M82.5 786V793M182.5 786V793M282.5 786V793M382.5 786V793M482.5 786V793M583.5 786V793M683.5 786V793M783.5 786V793M883.5 786V793M983.5 786V793M1084.5 786V793M1184.5 786V793M1284.5 786V793" stroke="#000" stroke-width="1" fill="none"/>
<path d="M107.5 786V788M132.5 786V788M157.5 786V788M207.5 786V788M232.5 786V788M257.5 786V788M307.5 786V788M332.5 786V788M357.5 786V788M407.5 786V788M432.5 786V788M457.5 786V788M508.5 786V788M533.5 786V788M558.5 786V788M608.5 786V788M633.5 786V788M658.5 786V788M708.5 786V788M733.5 786V788M758.5 786V788M808.5 786V788M833.5 786V788M858.5 786V788M908.5 786V788M933.5 786V788M958.5 786V788M1008.5 786V788M1033.5 786V788M1058.5 786V788M1109.5 786V788M1134.5 786V788M1159.5 786V788M1209.5 786V788M1234.5 786V788M1259.5 786V788" stroke="#404040" stroke-width="1" fill="none"/>
</svg>
 <div class="yl" style="top:779px">0</div>
<div class="yl" style="top:760px">1</div>
<div class="yl" style="top:742px">2</div>
<div class="yl" style="top:723px">3</div>
<div class="yl" style="top:705px">4</div>
<div class="yl" style="top:687px">5</div>
<div class="yl" style="top:668px">6</div>
<div class="yl" style="top:650px">7</div>
<div class="yl" style="top:632px">8</div>
<div class="yl" style="top:613px">9</div>
<div class="yl" style="top:595px">10</div>
<div class="yl" style="top:577px">11</div>
<div class="yl" style="top:558px">12</div>
<div class="yl" style="top:540px">13</div>
<div class="yl" style="top:522px">14</div>
<div class="yl" style="top:503px">15</div>
<div class="yl" style="top:485px">16</div>
<div class="yl" style="top:467px">17</div>
<div class="yl" style="top:448px">18</div>
<div class="yl" style="top:430px">19</div>
<div class="yl" style="top:412px">20</div>
<div class="yl" style="top:393px">21</div>
<div class="yl" style="top:375px">22</div>
<div class="yl" style="top:357px">23</div>
<div class="yl" style="top:338px">24</div>
<div class="yl" style="top:320px">25</div>
<div class="yl" style="top:302px">26</div>
<div class="yl" style="top:283px">27</div>
<div class="yl" style="top:265px">28</div>
<div class="yl" style="top:247px">29</div>
<div class="yl" style="top:228px">30</div>
<div class="yl" style="top:210px">31</div>
<div class="yl" style="top:192px">32</div>
<div class="yl" style="top:173px">33</div>
<div class="yl" style="top:155px">34</div>
 <div class="xl" style="left:41px">18.01.2003<br>00:00</div>
<div class="xl" style="left:141px">19.01.2003<br>00:00</div>
<div class="xl" style="left:241px">20.01.2003<br>00:00</div>
<div class="xl" style="left:341px">21.01.2003<br>00:00</div>
<div class="xl" style="left:441px">22.01.2003<br>00:00</div>
<div class="xl" style="left:542px">23.01.2003<br>00:00</div>
<div class="xl" style="left:642px">24.01.2003<br>00:00</div>
<div class="xl" style="left:742px">25.01.2003<br>00:00</div>
<div class="xl" style="left:842px">26.01.2003<br>00:00</div>
<div class="xl" style="left:942px">27.01.2003<br>00:00</div>
<div class="xl" style="left:1043px">28.01.2003<br>00:00</div>
<div class="xl" style="left:1143px">29.01.2003<br>00:00</div>
<div class="xl" style="left:1243px">30.01.2003<br>00:00</div>
 <div id="minuten">Minuten</div>

 <!-- status bar -->
 <div class="st" style="left:6px;letter-spacing:-0.25px">Bereit</div>
 <div class="pane" style="left:1237px;width:19px"></div>
 <div class="pane" style="left:1258px;width:28px"></div>
 <div class="pane" style="left:1288px;width:19px"></div>
 <div class="st" style="left:1260px;letter-spacing:-0.9px">NUM</div>
 <svg class="abs" style="left:1312px;top:846px" width="13" height="13" viewBox="0 0 13 13"><path d="M1 13L13 1M5 13L13 5M9 13L13 9" stroke="#aca899" stroke-width="1.4" fill="none"/><path d="M0 13L12 1M4 13L12 5M8 13L12 9" stroke="#fff" stroke-width="1" fill="none"/></svg>
</div>
</body>
</html>
